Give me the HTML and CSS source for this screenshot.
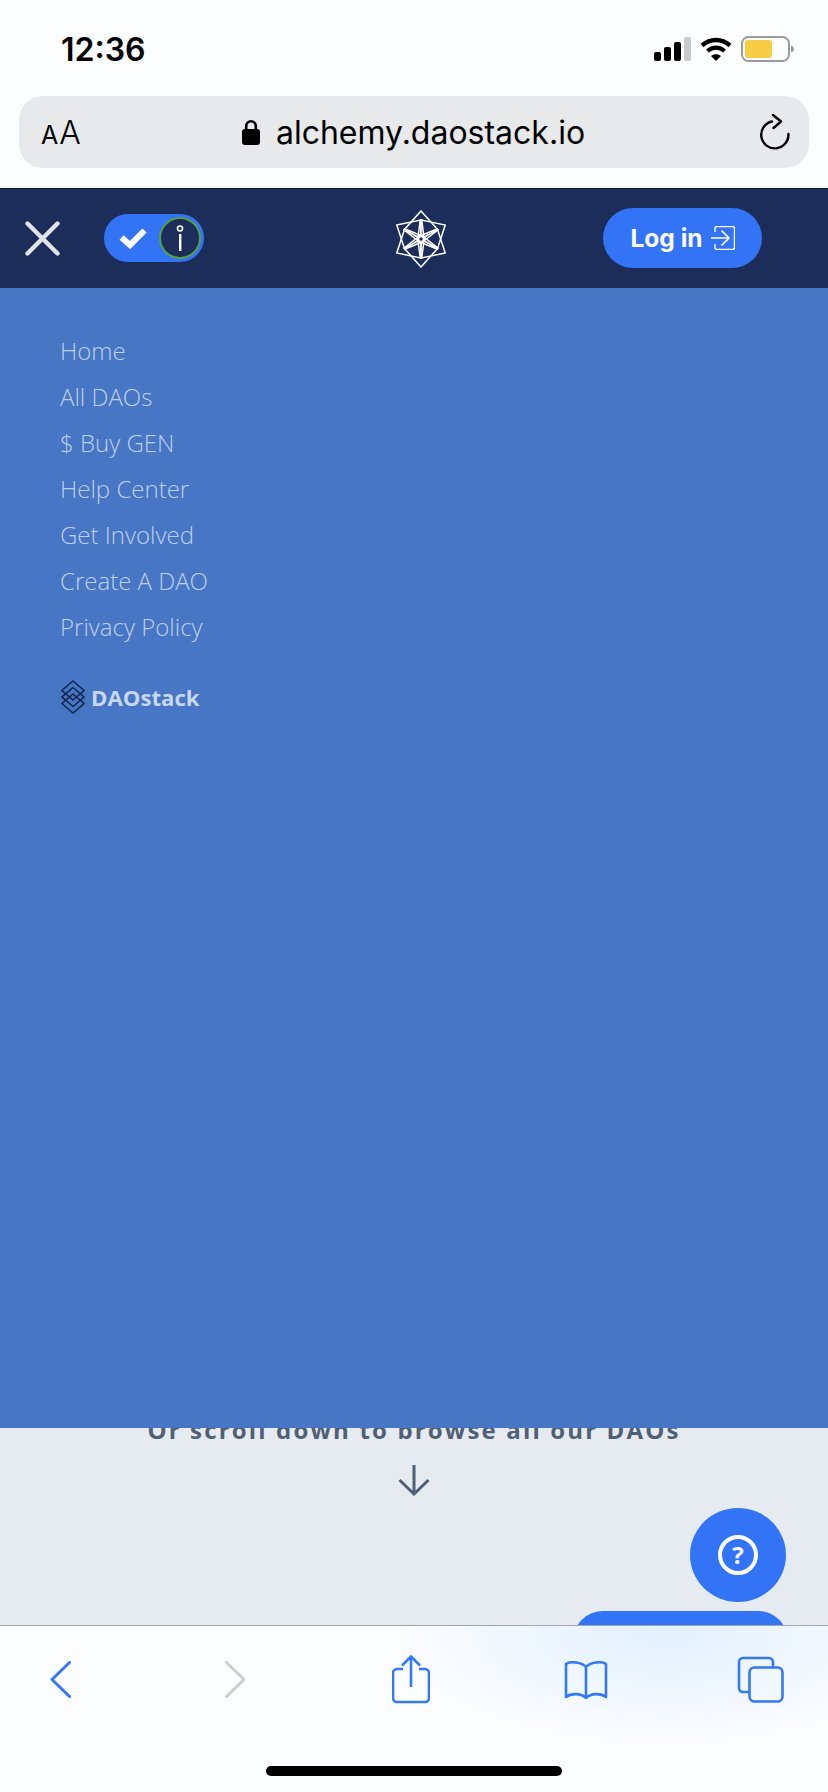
FILE: index.html
```html
<!DOCTYPE html>
<html lang="en">
<head>
    <meta charset="UTF-8">
    <meta name="viewport" content="width=device-width, initial-scale=1.0">
    <title>Alchemy</title>
    <link rel="stylesheet" href="styles.css">
</head>
<body>
    <div class="browser-top">
        <div class="status-bar">
            <span class="time">12:36</span>
            <div class="status-icons">
                <svg width="37" height="24" viewBox="0 0 37 24">
                    <rect x="0" y="15" width="7" height="9" rx="2" fill="#000"/>
                    <rect x="10" y="10" width="7" height="14" rx="2" fill="#000"/>
                    <rect x="20" y="5" width="7" height="19" rx="2" fill="#000"/>
                    <rect x="30" y="0" width="7" height="24" rx="2" fill="#c9cacc"/>
                </svg>
                <svg width="32" height="24" viewBox="0 0 32 24">
                    <path d="M2 8.500C10 1.200 22 1.200 30 8.500" fill="none" stroke="#000" stroke-width="4.400"/>
                    <path d="M7.500 14C12.500 9.600 19.500 9.600 24.500 14" fill="none" stroke="#000" stroke-width="4.200"/>
                    <path d="M11 19L16 24L21 19C18 16.500 14 16.500 11 19Z" fill="#000"/>
                </svg>
                <svg width="53" height="26" viewBox="0 0 53 26">
                    <rect x="1" y="1" width="47" height="24" rx="6.500" fill="none" stroke="#9a9b9d" stroke-width="2"/>
                    <rect x="4" y="4" width="27" height="18" rx="3" fill="#f8cd46"/>
                    <path d="M50 9.500C52 10 53 11.500 53 13C53 14.500 52 16 50 16.500Z" fill="#9a9b9d"/>
                </svg>
            </div>
        </div>
        <div class="address-bar">
            <span class="text-size"><span class="small-a">A</span>A</span>
            <span class="url">
                <svg width="18" height="26" viewBox="0 0 18 26">
                    <path d="M4.200 11V7a4.800 4.800 0 0 1 9.600 0v4" fill="none" stroke="#000" stroke-width="2.600"/>
                    <rect x="0" y="10" width="18" height="16" rx="3" fill="#000"/>
                </svg>
                alchemy.daostack.io
            </span>
            <svg class="reload" width="30" height="36" viewBox="0 0 30 36">
                <path d="M12 7.500A13.600 13.600 0 1 0 28.400 20" fill="none" stroke="#000" stroke-width="2.400" stroke-linecap="round"/>
                <path d="M13 1L21 7.500L13.500 14" fill="none" stroke="#000" stroke-width="2.400" stroke-linecap="round" stroke-linejoin="round"/>
            </svg>
        </div>
    </div>

    <nav class="site-nav">
        <svg class="close-icon" width="35" height="35" viewBox="0 0 35 35">
            <path d="M2.500 2.500L32.500 32.500M32.500 2.500L2.500 32.500" stroke="#dfe3ea" stroke-width="4.400" stroke-linecap="round"/>
        </svg>
        <div class="toggle">
            <svg width="28" height="22" viewBox="0 0 28 22">
                <path d="M2.500 10.500L11 18L25.500 3.500" fill="none" stroke="#fff" stroke-width="6"/>
            </svg>
            <span class="toggle-knob">
                <svg width="8" height="26" viewBox="0 0 8 26">
                    <circle cx="4" cy="3.500" r="2.500" fill="none" stroke="#fff" stroke-width="1.600"/>
                    <rect x="3" y="9" width="2.400" height="17" fill="#fff"/>
                </svg>
            </span>
        </div>
        <svg class="logo" width="50" height="58" viewBox="-25 -29 50 58">
            <g fill="none" stroke="#fff" stroke-width="1.500">
                <path d="M0 -28L17 -9L0 4L-17 -9Z"/>
                <path d="M0 -28L17 -9L0 4L-17 -9Z" transform="rotate(60)"/>
                <path d="M0 -28L17 -9L0 4L-17 -9Z" transform="rotate(120)"/>
                <path d="M0 -28L17 -9L0 4L-17 -9Z" transform="rotate(180)"/>
                <path d="M0 -28L17 -9L0 4L-17 -9Z" transform="rotate(240)"/>
                <path d="M0 -28L17 -9L0 4L-17 -9Z" transform="rotate(300)"/>
                <path d="M0 -20V20M-17.300 -10L17.300 10M17.300 -10L-17.300 10" stroke-width="1.800"/>
                <circle cx="0" cy="0" r="2.800" stroke-width="2.200" fill="#1b2d58"/>
            </g>
        </svg>
        <a class="login-btn">
            Log in
            <svg width="24" height="24" viewBox="0 0 24 24">
                <path d="M4 6V2.500a2 2 0 0 1 2-2h15.500a2 2 0 0 1 2 2v19a2 2 0 0 1-2 2H6a2 2 0 0 1-2-2V18" fill="none" stroke="#fff" stroke-width="1.400"/>
                <path d="M0 12H17M10.500 4.500L18 12L10.500 19.500" fill="none" stroke="#fff" stroke-width="1.600"/>
            </svg>
        </a>
    </nav>

    <div class="menu-panel">
        <ul class="menu-list">
            <li>Home</li>
            <li>All DAOs</li>
            <li>$ Buy GEN</li>
            <li>Help Center</li>
            <li>Get Involved</li>
            <li>Create A DAO</li>
            <li>Privacy Policy</li>
        </ul>
        <div class="daostack">
            <svg width="24" height="34" viewBox="0 0 24 34">
                <g fill="none" stroke="#12264f" stroke-width="1.500">
                    <path d="M12 1L23 10.500L12 20L1 10.500Z"/>
                    <path d="M12 7.500L23 17L12 26.500L1 17Z"/>
                    <path d="M12 14L23 23.500L12 33L1 23.500Z"/>
                </g>
            </svg>
            DAOstack
        </div>
    </div>

    <div class="page-rest">
        <p class="scroll-hint">Or scroll down to browse all our DAOs</p>
        <svg class="down-arrow" width="32" height="31" viewBox="0 0 32 31">
            <path d="M16 0V29M1.500 15L16 29L30.500 15" fill="none" stroke="#4f6076" stroke-width="3"/>
        </svg>
        <div class="help-btn"><span class="help-mark">?</span></div>
        <div class="chat-btn"></div>
    </div>

    <div class="browser-bottom">
        <div class="toolbar">
            <svg width="21" height="37" viewBox="0 0 21 37">
                <path d="M19.500 1.500L2 18.500L19.500 35.500" fill="none" stroke="#3478f6" stroke-width="3" stroke-linecap="round" stroke-linejoin="round"/>
            </svg>
            <svg width="21" height="37" viewBox="0 0 21 37">
                <path d="M1.500 1.500L19 18.500L1.500 35.500" fill="none" stroke="#cdcdcf" stroke-width="3" stroke-linecap="round" stroke-linejoin="round"/>
            </svg>
            <svg width="38" height="49" viewBox="0 0 38 49">
                <path d="M11 14H5a4 4 0 0 0-4 4v25a4 4 0 0 0 4 4h28a4 4 0 0 0 4-4V18a4 4 0 0 0-4-4h-6" fill="none" stroke="#3478f6" stroke-width="2.600"/>
                <path d="M19 32V2M10 10.500L19 1.500L28 10.500" fill="none" stroke="#3478f6" stroke-width="2.600"/>
            </svg>
            <svg width="44" height="38" viewBox="0 0 44 38">
                <path d="M22 6C18 1 6 0 2 3V36C7 32 17 32 22 37C27 32 37 32 42 36V3C38 0 26 1 22 6ZM22 6V37" fill="none" stroke="#3478f6" stroke-width="2.600" stroke-linejoin="round"/>
            </svg>
            <svg width="48" height="47" viewBox="0 0 48 47">
                <path d="M36 12V6a4 4 0 0 0-4-4H6a4 4 0 0 0-4 4v26a4 4 0 0 0 4 4h6" fill="none" stroke="#3478f6" stroke-width="2.600"/>
                <rect x="12.500" y="11.500" width="33" height="34" rx="5" fill="none" stroke="#3478f6" stroke-width="2.600"/>
            </svg>
        </div>
        <div class="home-indicator"></div>
    </div>
</body>
</html>
```

FILE: styles.css
```css
html, body {
    margin: 0;
    padding: 0;
}
body {
    width: 828px;
    height: 1792px;
    overflow: hidden;
    font-family: "Open Sans", sans-serif;
    background-color: #fcfdff;
}
svg { display: block; }

.browser-top {
    height: 188px;
    background-color: #fcfdff;
    padding: 0 19px;
    box-sizing: border-box;
}
.status-bar {
    height: 96px;
    padding: 2px 15px 0 42px;
    box-sizing: border-box;
    display: flex;
    align-items: center;
    justify-content: space-between;
}
.time {
    font-family: Inter, sans-serif;
    font-size: 32px;
    font-weight: 600;
    color: #000;
}
.status-icons {
    display: flex;
    align-items: center;
    gap: 9px;
}
.address-bar {
    height: 72px;
    background-color: #e8e9eb;
    border-radius: 24px;
    padding: 0 19px 0 18px;
    display: grid;
    grid-template-columns: 1fr auto 1fr;
    align-items: center;
    font-family: Inter, sans-serif;
    color: #000;
}
.text-size {
    margin-left: 4px;
    font-size: 32px;
    font-weight: 300;
}
.small-a {
    font-size: 25px;
    font-weight: 400;
    margin-right: 1px;
}
.url {
    font-size: 32px;
    display: flex;
    align-items: center;
    gap: 16px;
}
.reload { justify-self: end; }

.site-nav {
    height: 100px;
    box-sizing: border-box;
    border-top: 1px solid #0d1a38;
    background-color: #1b2d58;
    padding: 0 66px 2px 25px;
    display: flex;
    align-items: center;
}
.close-icon { margin-top: 2px; }
.toggle {
    width: 100px;
    height: 48px;
    margin-left: 44px;
    padding: 0 3px 0 15px;
    box-sizing: border-box;
    border-radius: 24px;
    background-color: #3374f6;
    display: flex;
    align-items: center;
    justify-content: space-between;
}
.toggle-knob {
    width: 42px;
    height: 42px;
    box-sizing: border-box;
    border: 2px solid #54a144;
    border-radius: 50%;
    background-color: #1b2d58;
    display: flex;
    align-items: center;
    justify-content: center;
}
.logo { margin-left: 192px; margin-top: 2px; }
.login-btn {
    margin-left: auto;
    width: 159px;
    height: 60px;
    border-radius: 30px;
    background-color: #3374f6;
    color: #fff;
    font-family: Inter, sans-serif;
    font-size: 24.500px;
    font-weight: 700;
    display: flex;
    align-items: center;
    justify-content: center;
    gap: 8px;
}

.menu-panel {
    position: relative;
    z-index: 1;
    height: 1140px;
    box-sizing: border-box;
    padding: 40px 0 0 60px;
    background-color: #4676c4;
}
.menu-list {
    list-style: none;
    margin: 0;
    padding: 0;
}
.menu-list li {
    height: 46px;
    line-height: 46px;
    font-size: 24px;
    font-weight: 300;
    color: #bfd0ec;
}
.daostack {
    margin-top: 30px;
    margin-left: 1px;
    display: flex;
    align-items: center;
    gap: 6px;
    font-size: 22.200px;
    font-weight: 700;
    color: #c8d7ef;
}

.page-rest {
    position: relative;
    height: 197px;
    overflow: hidden;
    background-color: #e6eaf1;
}
.scroll-hint {
    margin: -14px 0 0;
    text-align: center;
    font-size: 24px;
    line-height: 32px;
    font-weight: 700;
    letter-spacing: 2.150px;
    color: #4f6076;
}
.down-arrow { margin: 19px auto 0; }
.help-btn {
    position: absolute;
    left: 690px;
    top: 80px;
    width: 96px;
    height: 94px;
    border-radius: 50%;
    background-color: #3374f6;
    display: flex;
    align-items: center;
    justify-content: center;
}
.help-mark {
    width: 40px;
    height: 40px;
    box-sizing: border-box;
    border: 4px solid #fff;
    border-radius: 50%;
    color: #fff;
    font-size: 24px;
    font-weight: 700;
    line-height: 32px;
    text-align: center;
}
.chat-btn {
    position: absolute;
    left: 573px;
    top: 183px;
    width: 215px;
    height: 60px;
    border-radius: 30px;
    background-color: #3374f6;
}

.browser-bottom {
    height: 167px;
    box-sizing: border-box;
    border-top: 1px solid #a3a6ab;
    background: radial-gradient(ellipse 270px 115px at 665px 5px, #e2f0fe 0%, #fcfdff 100%);
}
.toolbar {
    width: 875px;
    height: 140px;
    margin-left: -27px;
    padding-top: 29px;
    box-sizing: border-box;
    display: grid;
    grid-template-columns: repeat(5, 175px);
    justify-items: center;
    align-items: center;
    align-content: start;
}
.home-indicator {
    width: 296px;
    height: 10px;
    margin: 0 auto;
    border-radius: 5px;
    background-color: #000;
}
```
